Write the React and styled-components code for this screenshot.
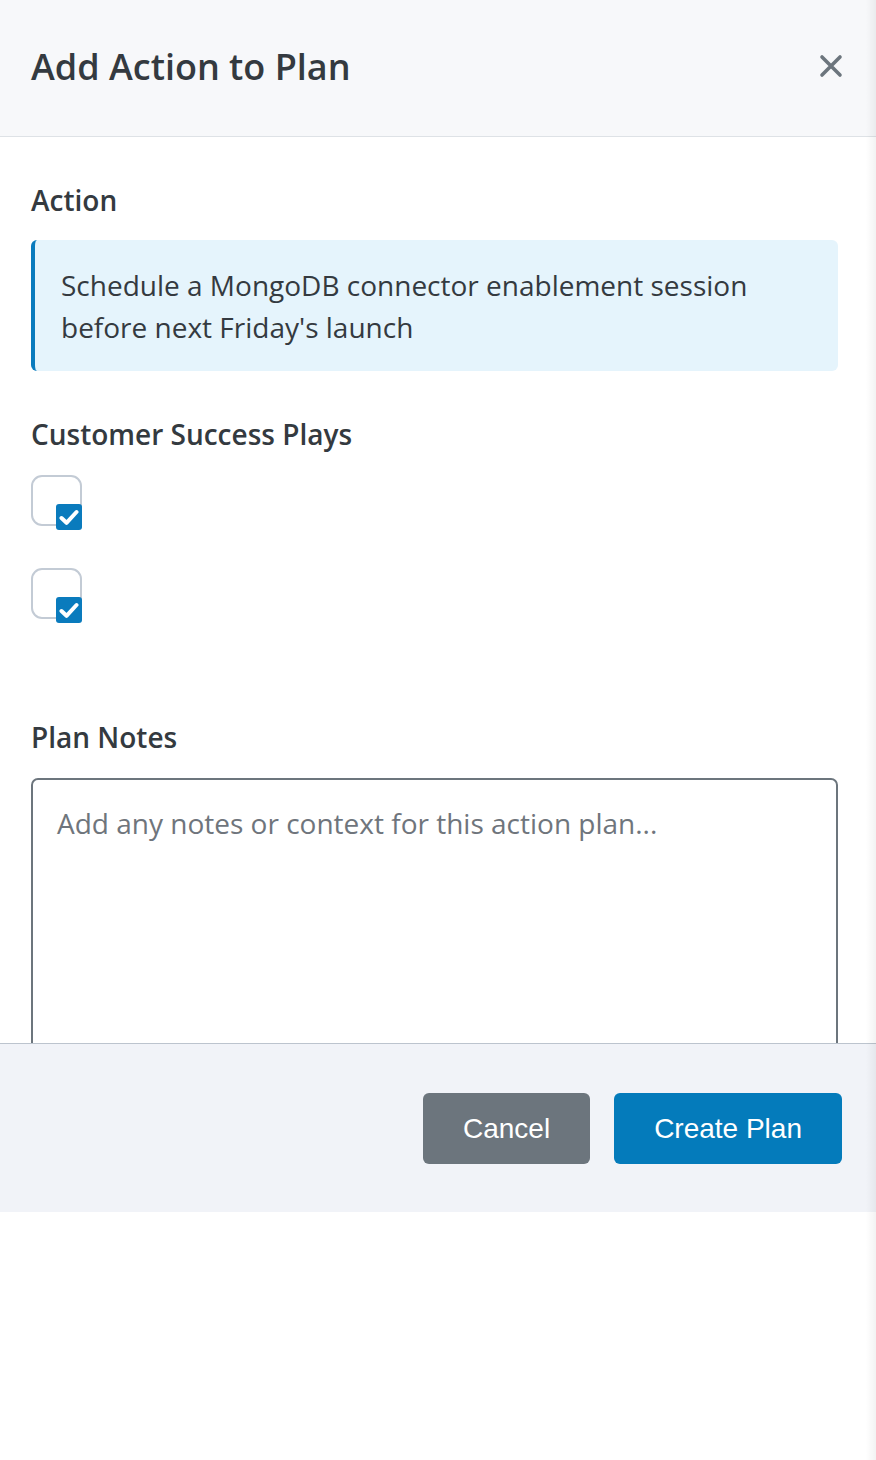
import React from "react";
import styled, { createGlobalStyle } from "styled-components";

const GlobalStyle = createGlobalStyle`
  * {
    box-sizing: border-box;
  }
  body {
    margin: 0;
    background: #fff;
    font-family: "Open Sans", "Noto Sans", sans-serif;
    color: #343a40;
  }
`;

const Page = styled.div`
  position: relative;
  width: 876px;
  min-height: 1460px;
  background: #fff;

  // soft edge of the panel on the right
  &::after {
    content: "";
    position: absolute;
    top: 0;
    right: 0;
    width: 10px;
    height: 100%;
    background: linear-gradient(to right, rgba(0, 0, 0, 0), rgba(0, 0, 0, 0.05));
    pointer-events: none;
  }
`;

const Modal = styled.div`
  display: flex;
  flex-direction: column;
`;

const Header = styled.div`
  display: flex;
  flex-direction: row;
  align-items: center;
  justify-content: space-between;
  height: 137px;
  padding: 0 32px 4px 31px;
  background-color: #f7f8fa;
  border-bottom: 1px solid #dee2e6;
`;

const Title = styled.h2`
  margin: 0;
  font-size: 36px;
  font-weight: 600;
  color: #343a40;
`;

const CloseButton = styled.button`
  display: flex;
  align-items: center;
  justify-content: center;
  width: 26px;
  height: 26px;
  padding: 0;
  border: none;
  background: none;
  color: #6c757d;
  cursor: pointer;
`;

const Body = styled.div`
  display: flex;
  flex-direction: column;
  height: 906px;
  overflow: hidden;
  padding: 42px 38px 0 31px;
`;

const Label = styled.div`
  font-size: 28px;
  line-height: 42px;
  font-weight: 600;
  color: #343a40;
  margin-top: ${(p) => p.$top || 0}px;
`;

const ActionBox = styled.div`
  margin-top: 19px;
  padding: 24px 28px 23px 26px;
  background-color: #e5f4fc;
  border-left: 4px solid #0a7bbd;
  border-radius: 6px;
  font-size: 28px;
  line-height: 42px;
  color: #343a40;
`;

const Plays = styled.div`
  display: flex;
  flex-direction: column;
  gap: 42px;
  margin-top: 20px;
`;

const Check = styled.label`
  display: flex;
  align-items: flex-end;
  justify-content: flex-end;
  width: 51px;
  height: 51px;
  border: 2px solid #c3cbd5;
  border-radius: 11px;
  background: #fff;
`;

const Tick = styled.span`
  display: flex;
  align-items: center;
  justify-content: center;
  width: 26px;
  height: 26px;
  margin: 0 -2px -6px 0;
  border-radius: 3px;
  background-color: #0a7bbd;
`;

const Notes = styled.textarea`
  display: block;
  width: 100%;
  height: 320px;
  flex-shrink: 0;
  margin-top: 20px;
  padding: 22px 24px;
  border: 2px solid #6c757d;
  border-radius: 7px;
  resize: none;
  font-family: "Open Sans", "Noto Sans", sans-serif;
  font-size: 28px;
  line-height: 42px;
  color: #343a40;
  outline: none;

  &::placeholder {
    color: #6f757c;
  }
`;

const Footer = styled.div`
  display: flex;
  flex-direction: row;
  justify-content: flex-end;
  gap: 24px;
  padding: 49px 34px 48px;
  background-color: #f1f3f8;
  border-top: 1px solid #bcc4ce;
`;

const Button = styled.button`
  height: 71px;
  padding: 0 40px;
  border: none;
  border-radius: 6px;
  background-color: ${(p) => (p.$primary ? "#047bbb" : "#6c757d")};
  color: #fff;
  font-family: "Liberation Sans", Arial, sans-serif;
  font-size: 28px;
  cursor: pointer;
`;

function CheckMark() {
  return (
    <svg width="20" height="17" viewBox="0 0 20 17">
      <path
        d="M2.5 9 L7.5 13.8 L17.5 3"
        fill="none"
        stroke="#fff"
        strokeWidth="4"
        strokeLinecap="round"
        strokeLinejoin="round"
      />
    </svg>
  );
}

function Play() {
  return (
    <Check>
      <Tick>
        <CheckMark />
      </Tick>
    </Check>
  );
}

export default function App() {
  return (
    <>
      <GlobalStyle />
      <Page>
        <Modal>
          <Header>
            <Title>Add Action to Plan</Title>
            <CloseButton aria-label="Close">
              <svg width="24" height="24" viewBox="0 0 24 24">
                <path
                  d="M3 3 L21 21 M21 3 L3 21"
                  stroke="currentColor"
                  strokeWidth="3.6"
                  strokeLinecap="round"
                />
              </svg>
            </CloseButton>
          </Header>
          <Body>
            <Label>Action</Label>
            <ActionBox>
              Schedule a MongoDB connector enablement session before next
              Friday's launch
            </ActionBox>
            <Label $top={42}>Customer Success Plays</Label>
            <Plays>
              <Play />
              <Play />
            </Plays>
            <Label $top={97}>Plan Notes</Label>
            <Notes placeholder="Add any notes or context for this action plan..." />
          </Body>
          <Footer>
            <Button>Cancel</Button>
            <Button $primary>Create Plan</Button>
          </Footer>
        </Modal>
      </Page>
    </>
  );
}
